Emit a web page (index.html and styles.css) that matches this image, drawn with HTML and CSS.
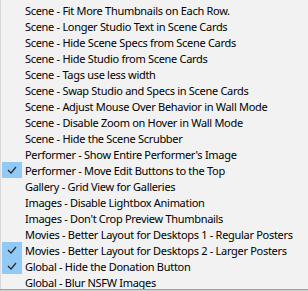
FILE: index.html
```html
<!DOCTYPE html>
<html lang="en">
<head>
    <meta charset="UTF-8">
    <title>Plugin Menu</title>
    <link rel="stylesheet" href="styles.css">
</head>
<body>
    <div class="menu">
        <div class="item"><span class="mark"></span>Scene - Fit More Thumbnails on Each Row.</div>
        <div class="item"><span class="mark"></span>Scene - Longer Studio Text in Scene Cards</div>
        <div class="item"><span class="mark"></span>Scene - Hide Scene Specs from Scene Cards</div>
        <div class="item"><span class="mark"></span>Scene - Hide Studio from Scene Cards</div>
        <div class="item"><span class="mark"></span>Scene - Tags use less width</div>
        <div class="item"><span class="mark"></span>Scene - Swap Studio and Specs in Scene Cards</div>
        <div class="item"><span class="mark"></span>Scene - Adjust Mouse Over Behavior in Wall Mode</div>
        <div class="item"><span class="mark"></span>Scene - Disable Zoom on Hover in Wall Mode</div>
        <div class="item"><span class="mark"></span>Scene - Hide the Scene Scrubber</div>
        <div class="item"><span class="mark"></span>Performer - Show Entire Performer's Image</div>
        <div class="item"><span class="mark checked"><svg width="10" height="8" viewBox="0 0 10 8"><polyline points="1,4 4,7 9,1" fill="none" stroke="#2b2b2b" stroke-width="1.2"/></svg></span>Performer - Move Edit Buttons to the Top</div>
        <div class="item"><span class="mark"></span>Gallery - Grid View for Galleries</div>
        <div class="item"><span class="mark"></span>Images - Disable Lightbox Animation</div>
        <div class="item"><span class="mark"></span>Images - Don't Crop Preview Thumbnails</div>
        <div class="item"><span class="mark"></span>Movies - Better Layout for Desktops 1 - Regular Posters</div>
        <div class="item"><span class="mark checked"><svg width="10" height="8" viewBox="0 0 10 8"><polyline points="1,4 4,7 9,1" fill="none" stroke="#2b2b2b" stroke-width="1.2"/></svg></span>Movies - Better Layout for Desktops 2 - Larger Posters</div>
        <div class="item"><span class="mark checked"><svg width="10" height="8" viewBox="0 0 10 8"><polyline points="1,4 4,7 9,1" fill="none" stroke="#2b2b2b" stroke-width="1.2"/></svg></span>Global - Hide the Donation Button</div>
        <div class="item"><span class="mark"></span>Global - Blur NSFW Images</div>
    </div>
    <div class="edge"></div>
</body>
</html>
```

FILE: styles.css
```css
body {
    margin: 0;
    background-color: #f2f2f2;
    font-family: "Noto Sans", "Open Sans", sans-serif;
    font-size: 11px;
    letter-spacing: -0.3px;
    color: #000;
    overflow: hidden;
}
.menu {
    height: 287px;
    padding-top: 2px;
    border-left: 1px solid #d9d9d9;
    overflow: hidden;
}
.item {
    display: flex;
    align-items: center;
    height: 16px;
    white-space: nowrap;
}
.mark {
    display: flex;
    align-items: center;
    justify-content: center;
    width: 20px;
    height: 16px;
    margin-left: 1px;
    margin-right: 3px;
    flex-shrink: 0;
}
.mark.checked {
    background-color: #91c9f7;
}
.edge {
    height: 1px;
    background-color: #a0a0a0;
    border-bottom: 1px solid #d0d0d0;
}
```
